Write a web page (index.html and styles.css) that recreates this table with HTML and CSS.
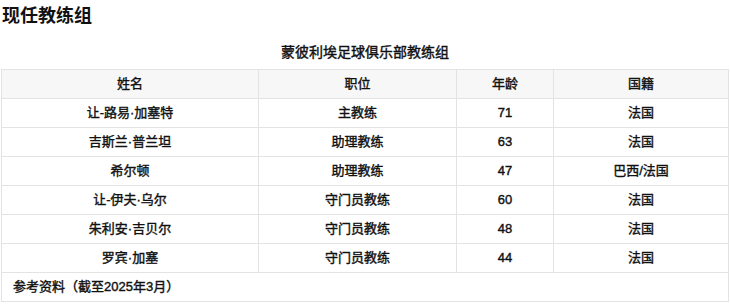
FILE: index.html
```html
<!DOCTYPE html>
<html lang="zh-CN">

<head>
  <meta charset="utf-8">
  <meta name="viewport" content="width=device-width, initial-scale=1">
  <title>现任教练组</title>
  <link rel="stylesheet" href="styles.css">
</head>

<body>

  <!-- Section title -->
  <h2 class="section_title">现任教练组</h2>

  <!-- Coaching staff table -->
  <table class="staff-table">
    <caption>蒙彼利埃足球俱乐部教练组</caption>
    <thead>
      <tr>
        <th class="col-name">姓名</th>
        <th class="col-role">职位</th>
        <th class="col-age">年龄</th>
        <th class="col-nation">国籍</th>
      </tr>
    </thead>
    <tbody>
      <tr>
        <td>让-路易·加塞特</td>
        <td>主教练</td>
        <td>71</td>
        <td>法国</td>
      </tr>
      <tr>
        <td>吉斯兰·普兰坦</td>
        <td>助理教练</td>
        <td>63</td>
        <td>法国</td>
      </tr>
      <tr>
        <td>希尔顿</td>
        <td>助理教练</td>
        <td>47</td>
        <td>巴西/法国</td>
      </tr>
      <tr>
        <td>让-伊夫·乌尔</td>
        <td>守门员教练</td>
        <td>60</td>
        <td>法国</td>
      </tr>
      <tr>
        <td>朱利安·吉贝尔</td>
        <td>守门员教练</td>
        <td>48</td>
        <td>法国</td>
      </tr>
      <tr>
        <td>罗宾·加塞</td>
        <td>守门员教练</td>
        <td>44</td>
        <td>法国</td>
      </tr>
    </tbody>
    <tfoot>
      <tr>
        <td colspan="4" class="source_note">参考资料（截至2025年3月）</td>
      </tr>
    </tfoot>
  </table>

</body>

</html>
```

FILE: styles.css
```css
body {
  margin: 0;
  padding: 0 1px;
  color: #111;
  font-family: "Liberation Sans", "Noto Sans CJK SC", sans-serif;
  font-size: 13px;
  background-color: #fff;
}

.section_title {
  margin: 0;
  padding-left: 1px;
  font-size: 18px;
  line-height: 32px;
  font-weight: bold;
}

.staff-table {
  width: 728px;
  border-collapse: collapse;
  table-layout: fixed;
}

.staff-table caption {
  padding: 10px 0 7px;
  font-size: 14px;
  line-height: 20px;
  -webkit-text-stroke: 0.4px #111;
}

.staff-table th,
.staff-table td {
  border: 1px solid #e3e3e3;
  padding: 4px 8px;
  line-height: 20px;
  text-align: center;
  font-weight: normal;
  -webkit-text-stroke: 0.4px #111;
}

.staff-table th {
  background-color: #f7f7f7;
}

/* widths minus the 16px of cell padding */
.col-name {
  width: 240px;
}

.col-role {
  width: 181px;
}

.col-age {
  width: 80px;
}

.staff-table .source_note {
  text-align: left;
  padding-left: 11px;
}
```
